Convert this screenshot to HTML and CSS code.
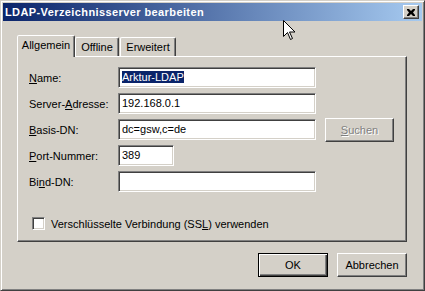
FILE: index.html
```html
<!DOCTYPE html>
<html lang="de">
<head>
  <meta charset="UTF-8">
  <title>LDAP-Verzeichnisserver bearbeiten</title>
  <link rel="stylesheet" href="styles.css">
</head>
<body>
  <div class="window">
    <div class="titlebar">
      <span class="title">LDAP-Verzeichnisserver bearbeiten</span>
      <div class="close">
        <svg width="8" height="7" viewBox="0 0 8 7">
          <path d="M0 0h2l2 2 2-2h2v1l-2 2.5 2 2.5v1h-2l-2-2-2 2h-2v-1l2-2.5-2-2.5z" fill="#000"/>
        </svg>
      </div>
    </div>

    <div class="client">
      <div class="tabs">
        <div class="tab active">Allgemein</div>
        <div class="tab">Offline</div>
        <div class="tab tab-wide">Erweitert</div>
      </div>

      <div class="panel">
        <div class="form">
          <div class="label"><u>N</u>ame:</div>
          <div class="field"><span class="selected">Arktur-LDAP</span></div>
          <div></div>

          <div class="label">Server-<u>A</u>dresse:</div>
          <div class="field">192.168.0.1</div>
          <div></div>

          <div class="label"><u>B</u>asis-DN:</div>
          <div class="field">dc=gsw,c=de</div>
          <div class="btn btn-search disabled"><u>S</u>uchen</div>

          <div class="label"><u>P</u>ort-Nummer:</div>
          <div class="field field-short">389</div>
          <div></div>

          <div class="label">Bi<u>n</u>d-DN:</div>
          <div class="field"></div>
          <div></div>
        </div>

        <div class="check">
          <div class="checkbox"></div>
          <span>Verschlüsselte Verbindung (SS<u>L</u>) verwenden</span>
        </div>
      </div>

      <div class="buttons">
        <div class="btn default">OK</div>
        <div class="btn">Abbrechen</div>
      </div>
    </div>

    <svg class="cursor" width="13" height="21" viewBox="0 0 13 21">
      <path d="M0.5 0.5v16l4-4 3 7 2-1-3-6.5h5.5z" fill="#fff" stroke="#000" stroke-width="1"/>
    </svg>
  </div>
</body>
</html>
```

FILE: styles.css
```css
* {
  margin: 0;
  padding: 0;
  box-sizing: border-box;
}

body {
  font-family: "Liberation Sans", Arial, sans-serif;
  font-size: 11px;
  color: #000;
  background-color: #d4d0c8;
}

u {
  text-decoration: underline;
  text-underline-offset: 1px;
}

.window {
  position: relative;
  width: 425px;
  height: 291px;
  padding: 2px;
  background-color: #d4d0c8;
  border: 1px solid;
  border-color: #d4d0c8 #404040 #404040 #d4d0c8;
  box-shadow: inset 1px 1px #fff, inset -1px -1px #808080;
}

.titlebar {
  height: 18px;
  display: flex;
  align-items: center;
  justify-content: space-between;
  padding: 0 3px 0 2px;
  background: linear-gradient(to right, #0a246a, #a6caf0);
}

.title {
  color: #fff;
  font-weight: bold;
  letter-spacing: 0.4px;
}

.close {
  width: 16px;
  height: 14px;
  display: flex;
  align-items: center;
  justify-content: center;
  background-color: #d4d0c8;
  border: 1px solid;
  border-color: #fff #404040 #404040 #fff;
  box-shadow: inset -1px -1px #808080;
}

.client {
  padding: 14px 15px 0 14px;
}

.tabs {
  display: flex;
  align-items: flex-end;
  height: 21px;
}

.tab {
  height: 19px;
  width: 44px;
  padding-top: 3px;
  text-align: center;
  line-height: 13px;
  border: 1px solid;
  border-bottom: none;
  border-color: #fff #404040 transparent #fff;
  box-shadow: inset -1px 0 #808080;
  border-radius: 2px 2px 0 0;
}

.tab-wide {
  width: 56px;
  margin-left: 1px;
}

.tab.active {
  position: relative;
  z-index: 1;
  width: 58px;
  height: 22px;
  margin-bottom: -1px;
  padding-top: 3px;
  background-color: #d4d0c8;
}

.panel {
  height: 186px;
  padding: 10px 11px 0 11px;
  border: 1px solid;
  border-color: #fff #404040 #404040 #fff;
  box-shadow: inset -1px -1px #808080;
}

.form {
  display: grid;
  grid-template-columns: 80px 198px 69px;
  grid-auto-rows: 21px;
  column-gap: 9px;
  row-gap: 5px;
  align-items: center;
}

.field {
  height: 21px;
  padding: 3px 0 0 3px;
  line-height: 13px;
  background-color: #fff;
  border: 1px solid;
  border-color: #808080 #fff #fff #808080;
  box-shadow: inset 1px 1px #404040, inset -1px -1px #d4d0c8;
  white-space: nowrap;
}

.field-short {
  width: 56px;
}

.selected {
  background-color: #0a246a;
  color: #fff;
}

.btn {
  height: 24px;
  display: flex;
  align-items: center;
  justify-content: center;
  background-color: #d4d0c8;
  border: 1px solid;
  border-color: #fff #404040 #404040 #fff;
  box-shadow: inset -1px -1px #808080;
}

.btn-search {
  margin: -1px 0 -2px;
}

.btn.disabled {
  color: #808080;
  text-shadow: 1px 1px #fff;
}

.check {
  display: flex;
  align-items: center;
  gap: 6px;
  margin: 25px 0 0 3px;
}

.checkbox {
  width: 13px;
  height: 13px;
  background-color: #fff;
  border: 1px solid;
  border-color: #808080 #fff #fff #808080;
  box-shadow: inset 1px 1px #404040, inset -1px -1px #d4d0c8;
}

.buttons {
  display: flex;
  justify-content: flex-end;
  gap: 9px;
  margin-top: 11px;
}

.buttons .btn {
  width: 70px;
}

.btn.default {
  border: 1px solid #000;
  box-shadow: inset 1px 1px #fff, inset -1px -1px #404040, inset -2px -2px #808080;
}

.cursor {
  position: absolute;
  left: 282px;
  top: 19px;
}
```
